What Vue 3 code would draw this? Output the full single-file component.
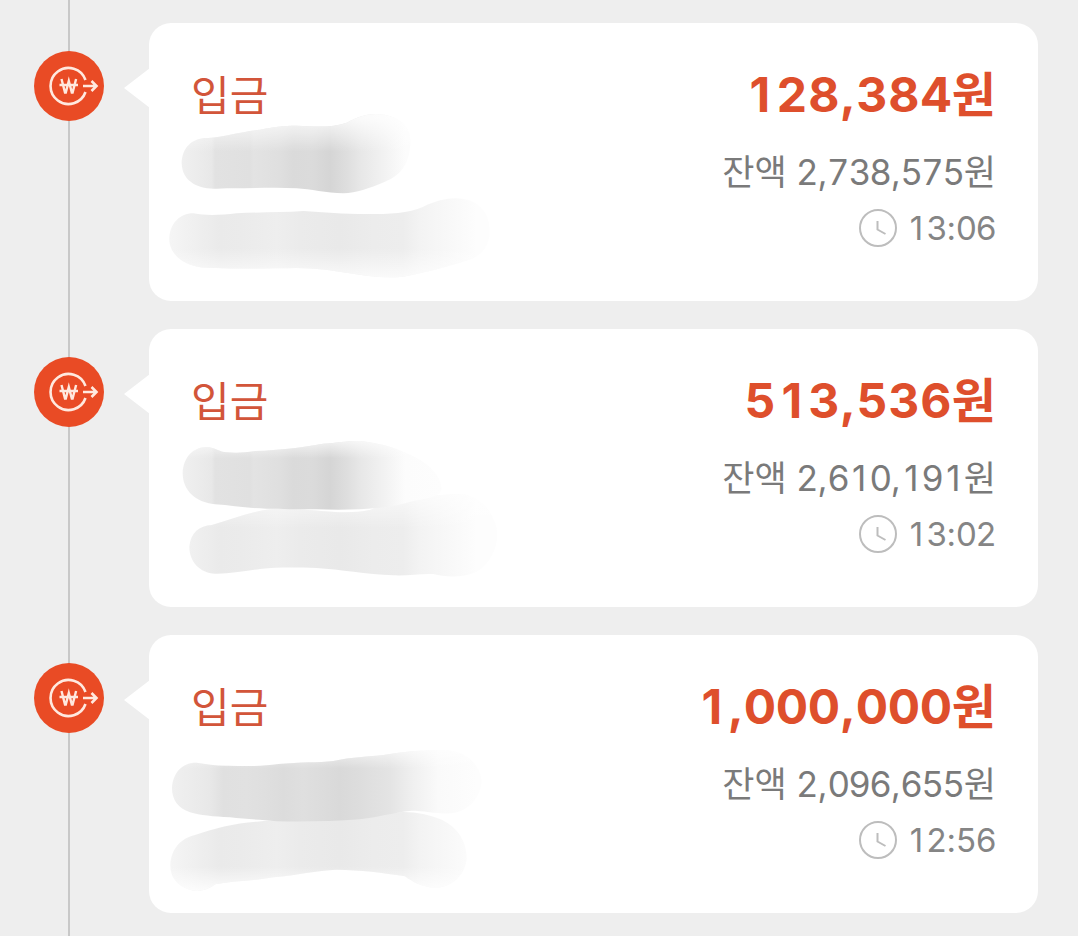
<template>
    <main class="history">
        <ul class="timeline">
            <li v-for="(entry, index) in entries" :key="entry.time" class="entry">
                <span class="badge">
                    <svg viewBox="0 0 70 70" aria-hidden="true">
                        <path d="M51.5 29A18 18 0 1 0 51.5 41" />
                        <path d="M49 35H62.5M57.5 30L62.5 35L57.5 40" />
                        <path class="won" d="M27.5 28L31 41.5H31.8L34.8 30L37.8 41.5H38.6L42.1 28M25.5 34H44" />
                    </svg>
                </span>

                <article class="card">
                    <div class="detail">
                        <h2>{{ entry.type }}</h2>
                        <svg class="smudge" :viewBox="entry.view" aria-hidden="true">
                            <defs>
                                <template v-for="(stroke, n) in entry.strokes" :key="n">
                                    <linearGradient :id="`tone-${index}-${n}`" gradientUnits="userSpaceOnUse" x1="0" x2="1050" y1="0" y2="0">
                                        <stop v-for="stop in stroke.tones" :key="stop[0]" :offset="stop[0] / 1050" :stop-color="stop[1]" />
                                    </linearGradient>
                                    <linearGradient :id="`fade-${index}-${n}`" gradientUnits="userSpaceOnUse" x1="0" x2="0" :y1="stroke.fade[0]" :y2="stroke.fade[1]">
                                        <stop offset="0" stop-color="#fff" stop-opacity="0.8" />
                                        <stop offset="1" stop-color="#fff" stop-opacity="0" />
                                    </linearGradient>
                                </template>
                            </defs>
                            <template v-for="(stroke, n) in entry.strokes" :key="n">
                                <path :d="stroke.d" :fill="`url(#tone-${index}-${n})`" />
                                <path :d="stroke.d" :fill="`url(#fade-${index}-${n})`" />
                            </template>
                        </svg>
                    </div>

                    <div class="figures">
                        <p class="amount"><Digits :text="won(entry.amount)" /></p>
                        <p class="balance"><Digits :text="'잔액 ' + won(entry.balance)" /></p>
                        <p class="time">
                            <svg viewBox="0 0 38 38" aria-hidden="true">
                                <circle cx="19" cy="19" r="18" />
                                <path d="M18.5 12V20.5L26.5 25" />
                            </svg>
                            <time><Digits :text="entry.time" /></time>
                        </p>
                    </div>
                </article>
            </li>
        </ul>
    </main>
</template>

<script setup>
    import { h } from 'vue';

    const won = (value) => value.toLocaleString('en-US') + '원';

    // Every digit gets the same width, Inter's own tabular 1 has a foot
    const Digits = (props) => [...props.text].map((char) => /\d/.test(char) ? h('span', { class: 'digit' }, char) : char);
    Digits.props = ['text'];

    // Tones run from left to right, [x, color]
    const dark = [[65, '#f0f0f0'], [155, '#e8e8e8'], [165, '#e2e2e2'], [270, '#e0e0e0'], [280, '#e3e3e3'], [360, '#dfdfdf'], [400, '#dadada'], [455, '#dbdbdb'], [510, '#d5d5d5'], [560, '#dedede'], [600, '#e7e7e7'], [680, '#f3f3f3'], [735, '#fcfcfc'], [850, '#fdfdfd']];
    const light = [[30, '#f5f5f5'], [110, '#efefef'], [180, '#eaeaea'], [245, '#ebebeb'], [350, '#eeeeee'], [420, '#ebebeb'], [540, '#e9e9e9'], [640, '#ececec'], [730, '#ededed'], [780, '#f3f3f3'], [880, '#f9f9f9'], [950, '#fdfdfd']];
    const wide = [[35, '#f0f0f0'], [150, '#e8e8e8'], [190, '#e0e0e0'], [260, '#e1e1e1'], [310, '#dfdfdf'], [370, '#dcdcdc'], [430, '#dfdfdf'], [540, '#d9d9d9'], [600, '#dddddd'], [690, '#e4e4e4'], [760, '#f0f0f0'], [835, '#fafafa'], [950, '#fdfdfd']];

    const entries = [
        {
            type: '입금',
            amount: 128384,
            balance: 2738575,
            time: '13:06',
            view: '3 180 1050 522',
            strokes: [
                { tones: dark, fade: [175, 275], d: 'M65 310C66 260 100 232 145 234C190 230 250 214 300 209C340 201 370 197 410 197C470 200 520 203 560 188C610 161 650 154 700 172C740 188 756 220 750 262C745 320 715 350 675 365C625 386 590 398 550 400C500 399 450 387 410 385C340 380 270 386 200 385C160 388 125 386 100 371C78 358 66 338 65 310Z' },
                { tones: light, fade: [660, 565], d: 'M28 535C30 490 60 460 100 460C140 468 185 465 230 460C300 456 370 458 430 453C490 457 550 462 620 462C690 462 745 460 790 440C850 412 900 408 940 426C980 446 992 485 988 530C980 570 955 595 910 605C840 626 790 638 730 650C670 656 620 648 570 640C510 630 470 625 410 624C320 625 240 627 170 624C120 626 85 617 60 598C38 580 27 560 28 535Z' },
            ],
        },
        {
            type: '입금',
            amount: 513536,
            balance: 2610191,
            time: '13:02',
            view: '3 168 1050 522',
            strokes: [
                { tones: light, fade: [350, 475], d: 'M88 530C92 488 118 467 155 465C210 450 270 425 330 418C430 408 540 440 630 420C720 380 810 378 890 372C945 370 995 410 1010 475C1018 525 993 580 950 605C910 623 860 623 820 612C780 610 745 618 700 616C620 613 540 598 470 594C400 592 350 592 300 597C250 604 205 612 165 611C120 609 88 575 88 530Z' },
                { tones: dark, fade: [205, 265], d: 'M68 310C70 260 100 232 140 231C165 232 178 246 200 247C230 249 255 248 285 243C360 240 430 232 490 221C535 219 560 212 600 213C650 218 700 230 740 250C800 275 840 310 845 355C845 385 790 384 735 400C680 416 580 422 470 418C410 418 365 417 320 416C260 415 215 406 165 403C105 397 68 360 68 310Z' },
            ],
        },
        {
            type: '입금',
            amount: 1000000,
            balance: 2096655,
            time: '12:56',
            view: '3 156 1050 522',
            strokes: [
                { tones: light, fade: [630, 560], d: 'M31 555C33 510 60 475 105 465C160 445 225 430 290 425C400 415 560 421 650 405C730 388 790 397 845 419C895 443 920 485 920 535C918 580 880 620 830 624C785 622 755 604 735 589C670 578 600 570 530 569C470 571 410 586 340 592C280 604 220 602 165 613C145 630 115 638 90 629C50 618 30 590 31 555Z' },
                { tones: wide, fade: [195, 265], d: 'M36 325C38 280 65 247 110 248C140 253 170 258 205 257C260 259 310 259 355 252C420 246 475 248 520 243C570 231 640 230 690 222C745 213 790 212 840 210C905 208 955 240 965 300C965 350 925 395 875 400C835 402 790 392 755 392C700 398 660 410 600 418C520 424 430 426 350 424C300 418 255 418 210 412C160 410 120 406 90 397C55 385 36 360 36 325Z' },
            ],
        },
    ];
</script>

<style>
    body {
        margin: 0;
        background: #eeeeee;
    }
</style>

<style scoped>
    .history {
        min-height: 100vh;
        box-sizing: border-box;
        position: relative;
        padding: 23px 40px 22px 34px;
        background: #eeeeee;
        font-family: Inter, "Noto Sans CJK KR", sans-serif;
    }

    .history::before {
        content: "";
        position: absolute;
        top: 0;
        bottom: 0;
        left: 68px;
        width: 2px;
        background: #c8c8c8;
    }

    .timeline {
        display: flex;
        flex-direction: column;
        gap: 28px;
        margin: 0;
        padding: 0;
        list-style: none;
    }

    .entry {
        display: flex;
        align-items: flex-start;
        gap: 45px;
    }

    .badge {
        position: relative;
        flex: none;
        width: 70px;
        height: 70px;
        margin-top: 28px;
        border-radius: 50%;
        background: #e94b25;
    }

    .badge svg {
        display: block;
        fill: none;
        stroke: #ffe9df;
        stroke-width: 2.6;
    }

    .badge .won {
        stroke-width: 2.4;
    }

    .card {
        position: relative;
        flex: 1;
        display: flex;
        justify-content: space-between;
        padding: 0 42px 7px 12px;
        border-radius: 22px;
        background: #fff;
    }

    .card::before {
        content: "";
        position: absolute;
        top: 45px;
        left: -25px;
        width: 26px;
        height: 40px;
        background: #fff;
        clip-path: polygon(0 50%, 100% 0, 100% 100%);
    }

    .detail {
        padding-top: 49px;
    }

    h2 {
        margin: 0 0 0 30px;
        color: #d2553a;
        font-size: 42px;
        font-weight: 400;
        line-height: 48px;
    }

    .smudge {
        display: block;
        width: 350px;
        height: 174px;
        overflow: visible;
    }

    .figures {
        padding-top: 42px;
        text-align: right;
        white-space: nowrap;
    }

    .figures :deep(.digit) {
        display: inline-block;
        text-align: center;
    }

    p {
        margin: 0;
    }

    .amount {
        margin-bottom: 19px;
        color: #de4f2c;
        font-size: 48px;
        font-weight: 700;
        line-height: 60px;
    }

    .amount :deep(.digit) {
        width: 32px;
    }

    .balance {
        color: #7a7a7a;
        font-size: 35px;
        line-height: 56px;
    }

    .balance :deep(.digit) {
        width: 21px;
    }

    .time {
        display: flex;
        justify-content: flex-end;
        align-items: center;
        gap: 9px;
        color: #858585;
        font-size: 33px;
        line-height: 56px;
    }

    .time :deep(.digit) {
        width: 20px;
    }

    .time svg {
        width: 38px;
        height: 38px;
        fill: none;
        stroke: #bdbdbd;
        stroke-width: 2;
    }
</style>
